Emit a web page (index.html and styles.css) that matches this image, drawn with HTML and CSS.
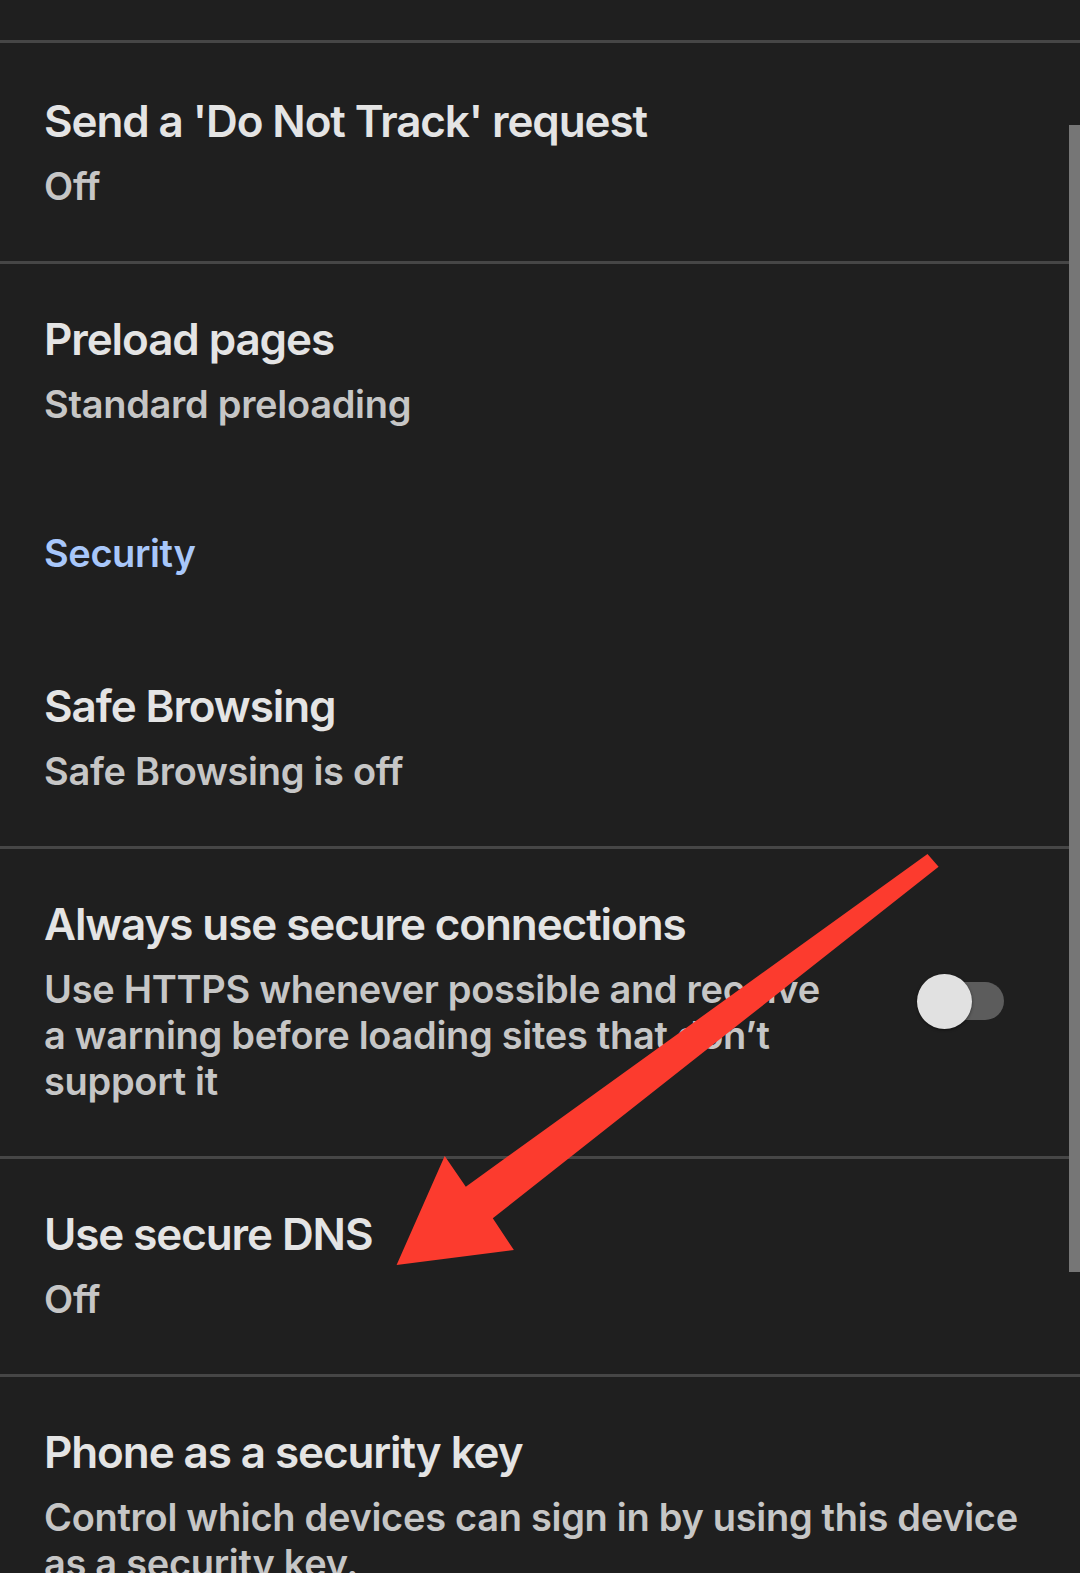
FILE: index.html
```html
<!DOCTYPE html>
<html lang="en">
<head>
<meta charset="utf-8">
<title>Privacy and security</title>
<link rel="stylesheet" href="styles.css">
</head>
<body>
<div class="screen">
  <div class="top-gap"></div>

  <div class="row divided first">
    <div class="text">
      <div class="title">Send a 'Do Not Track' request</div>
      <div class="summary">Off</div>
    </div>
  </div>

  <div class="row divided">
    <div class="text">
      <div class="title">Preload pages</div>
      <div class="summary">Standard preloading</div>
    </div>
  </div>

  <div class="section">Security</div>

  <div class="row">
    <div class="text">
      <div class="title">Safe Browsing</div>
      <div class="summary">Safe Browsing is off</div>
    </div>
  </div>

  <div class="row divided">
    <div class="text">
      <div class="title">Always use secure connections</div>
      <div class="summary">Use HTTPS whenever possible and receive<br>a warning before loading sites that don’t<br>support it</div>
    </div>
    <div class="toggle" role="switch" aria-checked="false">
      <span class="track"></span>
      <span class="thumb"></span>
    </div>
  </div>

  <div class="row divided">
    <div class="text">
      <div class="title">Use secure DNS</div>
      <div class="summary">Off</div>
    </div>
  </div>

  <div class="row divided">
    <div class="text">
      <div class="title">Phone as a security key</div>
      <div class="summary">Control which devices can sign in by using this device<br>as a security key.</div>
    </div>
  </div>

  <div class="scrollbar"></div>

  <svg class="arrow" width="1080" height="1573" viewBox="0 0 1080 1573" aria-hidden="true">
    <polygon points="927.5,854 938.6,866.7 492.8,1218.3 513.9,1250 396.6,1265 444.7,1156 465.8,1186.7" />
  </svg>
</div>
</body>
</html>
```

FILE: styles.css
```css
html, body {
  margin: 0;
  padding: 0;
  height: 100%;
  overflow: hidden;
  background: #1f1f1f;
}

.screen {
  position: relative;
  width: 1080px;
  min-height: 1573px;
  background: #1f1f1f;
  font-family: Inter, "Noto Sans", "Liberation Sans", sans-serif;
  -webkit-font-smoothing: antialiased;
}

.top-gap {
  height: 40px;
}

.row {
  display: flex;
  align-items: center;
  padding: 49px 30px 52px 44px;
}

.row.divided {
  border-top: 3px solid #464646;
}

.row.first {
  padding-top: 52px;
}

.text {
  flex: 1;
  min-width: 0;
  white-space: nowrap;
}

.title {
  font-size: 44px;
  line-height: 52px;
  font-weight: 600;
  color: #e4e4e4;
  letter-spacing: -1.1px;
}

.summary {
  margin-top: 16px;
  font-size: 38px;
  line-height: 46px;
  font-weight: 600;
  color: #c6c6c6;
  letter-spacing: -0.3px;
}

.section {
  padding: 51px 44px 55px;
  font-size: 38px;
  line-height: 46px;
  font-weight: 600;
  color: #a8c7fa;
  letter-spacing: -0.4px;
}

.toggle {
  position: relative;
  width: 87px;
  height: 55px;
  margin-right: 46px;
  flex: none;
}

.track {
  position: absolute;
  left: 7px;
  right: 0;
  top: 8px;
  height: 38px;
  border-radius: 19px;
  background: #5c5c5c;
}

.thumb {
  position: absolute;
  left: 0;
  top: 0;
  width: 55px;
  height: 55px;
  border-radius: 50%;
  background: #e1e1e1;
  box-shadow: 0 1px 3px rgba(0, 0, 0, 0.5);
}

.scrollbar {
  position: absolute;
  right: 0;
  top: 125px;
  width: 11px;
  height: 1147px;
  background: #767676;
}

.arrow {
  position: absolute;
  left: 0;
  top: 0;
  pointer-events: none;
}

.arrow polygon {
  fill: #fc3b2e;
}
```
